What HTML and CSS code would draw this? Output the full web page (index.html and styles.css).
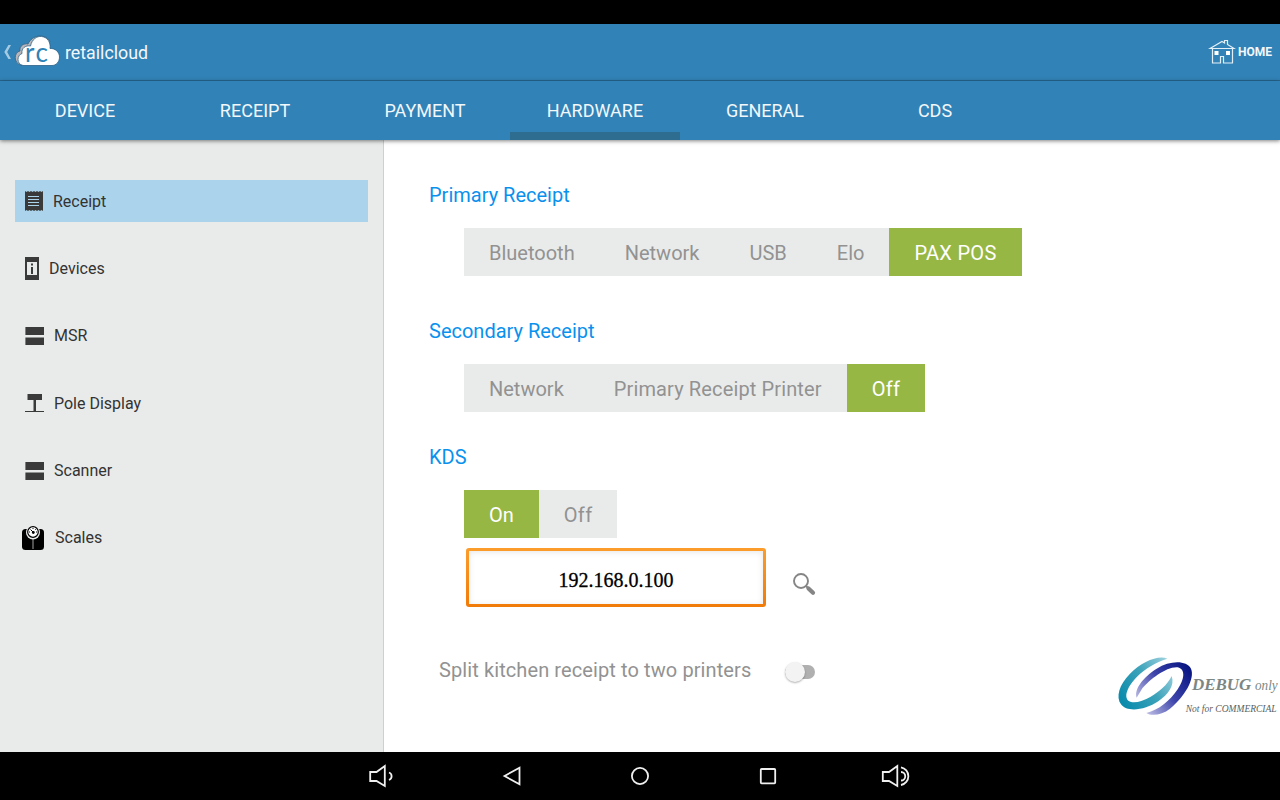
FILE: index.html
```
<!DOCTYPE html>
<html lang="en">
<head>
    <meta charset="UTF-8">
    <meta name="viewport" content="width=device-width, initial-scale=1.0">
    <title>retailcloud</title>
    <link rel="stylesheet" href="styles.css">
</head>
<body>
    <header class="action-bar">
        <div class="brand">
            <svg class="back" width="8" height="16" viewBox="0 0 8 16"><path d="M7 1 H4.400 L.3 8 L4.400 15 H7 L3.200 8 Z" fill="#a5cbe3"/></svg>
            <svg class="cloud" width="47" height="34" viewBox="0 0 47 34">
                <path d="M7 31 C-1 29 0 18 6 17 C5 12 10 9 14 10 C18 1 30 -1 36 7 L28 31 Z" fill="#b9b5b8" stroke="#2b6289" stroke-width=".8"/>
                <path d="M9 31.500 C2 30 3 21 8 19.500 C7 14 12 11 16.500 12 C18 5 23 2 27.500 2.500 C33 3 37 8 36 14.500 C41 14 45.500 18 45.500 23 C45.500 28 42 31.500 38 31.500 Z" fill="#fff" stroke="#2b6289" stroke-width=".8"/>
                <text x="11" y="28" class="cloud-text" textLength="23">rc</text>
            </svg>
            <span class="brand-name">retailcloud</span>
        </div>
        <div class="home">
            <svg width="28" height="26" viewBox="0 0 28 26" fill="none" stroke="#e3eff7" stroke-width="1.200">
                <path d="M2 9.500 L14 2.500 L16.500 4 V1.500 H19.500 V5.500 L26 9.500 Z"/>
                <path d="M4.500 9.500 V24 H12.500 V17.500 H15.500 V24 H24.500 V9.500"/>
                <path d="M6.500 12 h4 v4 h-4 Z M18 12 h4 v4 h-4 Z" fill="#fff" stroke="none"/>
            </svg>
            <span>HOME</span>
        </div>
    </header>

    <nav class="tabs">
        <div class="tab">DEVICE</div>
        <div class="tab">RECEIPT</div>
        <div class="tab">PAYMENT</div>
        <div class="tab active">HARDWARE</div>
        <div class="tab">GENERAL</div>
        <div class="tab">CDS</div>
    </nav>

    <main class="page">
        <aside class="sidebar">
            <div class="item selected">
                <svg width="18" height="20" viewBox="0 0 18 20">
                    <path d="M0 0 l1.500 1 1.500 -1 1.500 1 1.500 -1 1.500 1 1.500 -1 1.500 1 1.500 -1 1.500 1 1.500 -1 1.500 1 1.500 -1 V20 l-1.500 -1 -1.500 1 -1.500 -1 -1.500 1 -1.500 -1 -1.500 1 -1.500 -1 -1.500 1 -1.500 -1 -1.500 1 -1.500 -1 -1.500 1 Z" fill="#3a3a3a"/>
                    <path d="M3 5.500 H14 M3 8.500 H14 M3 11.500 H14 M3 14.500 H14" stroke="#abd4ec"/>
                </svg>
                <span>Receipt</span>
            </div>
            <div class="item">
                <svg width="14" height="23" viewBox="0 0 14 23">
                    <path d="M0 0 H14 V23 H0 Z" fill="#3a3a3a"/>
                    <path d="M2 5 H12 V18 H2 Z" fill="#e9ebea"/>
                    <path d="M6 6.500 h2 v2 h-2 Z M6 10 h2 v7 h-2 Z" fill="#3a3a3a"/>
                </svg>
                <span>Devices</span>
            </div>
            <div class="item">
                <svg width="19" height="18" viewBox="0 0 19 18"><path d="M.4 0 H19 V8 H.4 Z M.4 10.500 H19 V18 H.4 Z" fill="#3a3a3a"/></svg>
                <span>MSR</span>
            </div>
            <div class="item">
                <svg width="19" height="18" viewBox="0 0 19 18"><path d="M2.500 0 H17 V6 H11 V17 H19 V18 H0 V17 H8.500 V6 H2.500 Z" fill="#3a3a3a"/></svg>
                <span>Pole Display</span>
            </div>
            <div class="item">
                <svg width="19" height="18" viewBox="0 0 19 18"><path d="M.4 0 H19 V8 H.4 Z M.4 10.500 H19 V18 H.4 Z" fill="#3a3a3a"/></svg>
                <span>Scanner</span>
            </div>
            <div class="item scales">
                <svg width="22" height="24" viewBox="0 0 22 24">
                    <rect x="0" y="3" width="22" height="21" rx="3.500"/>
                    <path d="M11 13 V23" stroke="#ccc" stroke-width=".8"/>
                    <circle cx="11" cy="6.500" r="7" fill="#e9ebea"/>
                    <circle cx="11" cy="6" r="5.300" fill="#fff" stroke="#000" stroke-width="1.200"/>
                    <path d="M11 6 L8.500 3.500 M11 2 V3 M15 6 H14 M8 6 H7 M14 3 l-.7 .7" stroke="#000"/>
                    <circle cx="11.300" cy="6.500" r="1.400"/>
                </svg>
                <span>Scales</span>
            </div>
        </aside>

        <section class="content">
            <h2>Primary Receipt</h2>
            <div class="segments">
                <div class="seg">Bluetooth</div>
                <div class="seg">Network</div>
                <div class="seg">USB</div>
                <div class="seg">Elo</div>
                <div class="seg on spaced">PAX POS</div>
            </div>

            <h2 class="secondary">Secondary Receipt</h2>
            <div class="segments">
                <div class="seg">Network</div>
                <div class="seg long">Primary Receipt Printer</div>
                <div class="seg on spaced">Off</div>
            </div>

            <h2 class="kds">KDS</h2>
            <div class="segments">
                <div class="seg on">On</div>
                <div class="seg spaced">Off</div>
            </div>
            <div class="address">
                <div class="field"><div class="field-inner">192.168.0.100</div></div>
                <svg width="24" height="24" viewBox="0 0 24 24" fill="none" stroke="#858585">
                    <circle cx="9" cy="9" r="7" stroke-width="1.900"/>
                    <path d="M13.800 13.800 L16.500 16.500" stroke-width="2"/>
                    <path d="M16.500 16.500 L21 20.800" stroke-width="4.200" stroke-linecap="round"/>
                </svg>
            </div>
            <div class="split">
                <span>Split kitchen receipt to two printers</span>
                <div class="switch"><div class="thumb"></div></div>
            </div>
        </section>

        <!-- debug build watermark -->
        <svg class="watermark" width="180" height="90" viewBox="0 0 540 270">
            <defs>
                <linearGradient id="teal" x1="0" y1=".7" x2="1" y2=".1">
                    <stop offset="0" stop-color="#0c8cac"/>
                    <stop offset=".5" stop-color="#3da3ba"/>
                    <stop offset="1" stop-color="#a5d5e2"/>
                </linearGradient>
                <linearGradient id="navy" x1="1" y1=".1" x2="0" y2=".8">
                    <stop offset="0" stop-color="#04127f"/>
                    <stop offset=".5" stop-color="#3c43aa"/>
                    <stop offset="1" stop-color="#c9c9ea"/>
                </linearGradient>
            </defs>
            <g transform="translate(45 36)">
                <path d="M157 20 C130 8 80 30 45 65 C12 98 2 135 18 157 C36 182 90 175 130 148 C160 127 180 100 170 72 C157 99 133 119 107 134 C75 153 37 159 34 134 C32 100 85 42 157 20 Z" fill="url(#teal)"/>
                <path d="M65 137 C56 112 85 75 125 50 C165 25 214 24 228 50 C241 80 208 135 165 170 C142 188 111 194 94 183 C132 174 164 147 188 112 C207 84 214 53 188 46 C155 43 105 82 82 109 Z" fill="url(#navy)"/>
            </g>
            <text x="276" y="150" class="wm-debug" textLength="178" lengthAdjust="spacingAndGlyphs">DEBUG</text>
            <text x="465" y="150" class="wm-only" textLength="68" lengthAdjust="spacingAndGlyphs">only</text>
            <text x="257" y="217" class="wm-note" textLength="273" lengthAdjust="spacingAndGlyphs">Not for COMMERCIAL</text>
        </svg>
    </main>

    <footer class="nav-bar">
        <svg width="32" height="24" viewBox="0 0 32 24"><path d="M2.200 8 H8.500 L16.800 2 V22 L8.500 17 H2.200 Z"/><path d="M21 8.500 A4 4 0 0 1 21 16"/></svg>
        <svg width="32" height="24" viewBox="0 0 32 24"><path d="M8.500 12 L23.500 3.700 V20.300 Z"/></svg>
        <svg width="32" height="24" viewBox="0 0 32 24"><circle cx="16" cy="12" r="8.100"/></svg>
        <svg width="32" height="24" viewBox="0 0 32 24"><rect x="8.800" y="5" width="14.400" height="14.400" rx=".8"/></svg>
        <svg width="32" height="24" viewBox="0 0 32 24"><path d="M2.800 8 H9 L17.300 2 V22 L9 17 H2.800 Z"/><path d="M21 8 A4.200 4.200 0 0 1 21 16.500"/><path d="M21 3.300 A9 9 0 0 1 21 21"/></svg>
    </footer>
</body>
</html>
```
FILE: styles.css
```
* {
    box-sizing: border-box;
}
body {
    margin: 0;
    height: 800px;
    padding-top: 24px;
    background: #000;
    font-family: Roboto, sans-serif;
    display: flex;
    flex-direction: column;
    overflow: hidden;
}
svg {
    flex: none;
    display: block;
}
.action-bar {
    height: 57px;
    background: #3182b6;
    border-bottom: 1px solid #276892;
    color: #f2f7fa;
    display: flex;
    justify-content: space-between;
    padding: 0 8px 0 4px;
}
.brand, .home {
    display: flex;
    align-items: center;
}
.cloud {
    margin: -3px 0 0 2px;
}
.cloud-text {
    font-family: Lato, sans-serif;
    font-size: 26px;
    fill: #3182b6;
}
.brand-name {
    font-size: 17.8px;
    margin: 1px 0 0 4px;
}
.home {
    font-size: 12px;
    font-weight: bold;
    gap: 2px;
}
.tabs {
    height: 59px;
    background: #3182b6;
    display: flex;
    position: relative;
    box-shadow: 0 1px 4px rgba(0, 0, 0, 0.5);
    z-index: 1;
}
.tab {
    width: 170px;
    height: 59px;
    line-height: 60px;
    text-align: center;
    font-size: 18px;
    color: #f2f7fa;
}
.tab.active {
    box-shadow: inset 0 -8px #2e6d90;
}
.page {
    flex: 1;
    background: #fff;
    display: flex;
    position: relative;
}
.sidebar {
    width: 384px;
    background: #e9ebea;
    border-right: 1px solid #cfcfcf;
    padding: 40px 15px 0;
    display: flex;
    flex-direction: column;
    gap: 25.4px;
}
.item {
    height: 42px;
    padding-left: 10px;
    display: flex;
    align-items: center;
    gap: 10px;
    font-size: 16px;
    color: #333;
}
.item.selected {
    background: #abd4ec;
}
.item.scales {
    padding-left: 7px;
    gap: 11px;
}
.content {
    padding: 43px 0 0 45px;
}
h2 {
    margin: 0 0 21px;
    font-size: 20px;
    font-weight: normal;
    line-height: 24px;
    color: #0a91ee;
}
h2.secondary {
    margin-top: 43px;
}
h2.kds {
    margin-top: 33px;
}
.segments {
    display: flex;
    margin-left: 35px;
}
.seg {
    height: 48px;
    line-height: 50px;
    padding: 0 25px;
    font-size: 20px;
    background: #e9ebea;
    color: #929292;
}
.seg.on {
    background: #97b744;
    color: #fff;
}
.seg.spaced {
    letter-spacing: 0.3px;
}
.seg.long {
    letter-spacing: 0.13px;
}
.address {
    display: flex;
    align-items: center;
    gap: 26px;
    margin: 10px 0 0 37px;
}
.address svg {
    margin-top: 12px;
}
.field {
    width: 300px;
    height: 59px;
    padding: 3px;
    border-radius: 3px;
    background: linear-gradient(#fb9d2c, #f17b08);
}
.field-inner {
    height: 53px;
    line-height: 59px;
    text-align: center;
    background: #fff;
    box-shadow: inset 0 1px 6px rgba(0, 0, 0, 0.1);
    font-family: "Liberation Serif", serif;
    font-size: 20px;
    -webkit-text-stroke: 0.3px #000;
    color: #000;
}
.split {
    display: flex;
    align-items: center;
    gap: 34px;
    margin: 51px 0 0 10px;
    font-size: 20px;
    line-height: 24px;
    letter-spacing: 0.1px;
    color: #929292;
}
.switch {
    width: 30px;
    height: 14px;
    margin-top: 4px;
    border-radius: 7px;
    background: #b0b0b0;
    display: flex;
    align-items: center;
}
.thumb {
    width: 20px;
    height: 20px;
    flex: none;
    border-radius: 50%;
    background: #f3f3f3;
    box-shadow: 0 1px 2px rgba(0, 0, 0, 0.3);
}
.watermark {
    position: absolute;
    right: 0;
    bottom: 22px;
}
.watermark text {
    font-family: "Liberation Serif", serif;
    font-style: italic;
    fill: #7c8784;
}
.watermark .wm-debug {
    font-size: 49px;
    font-weight: bold;
}
.watermark .wm-only {
    font-size: 42px;
}
.watermark .wm-note {
    font-size: 30px;
    fill: #59625f;
}
.nav-bar {
    height: 48px;
    background: #000;
    display: flex;
    justify-content: center;
    align-items: center;
    gap: 96px;
}
.nav-bar svg {
    fill: none;
    stroke: #f0f0f0;
    stroke-width: 1.8;
}
```
